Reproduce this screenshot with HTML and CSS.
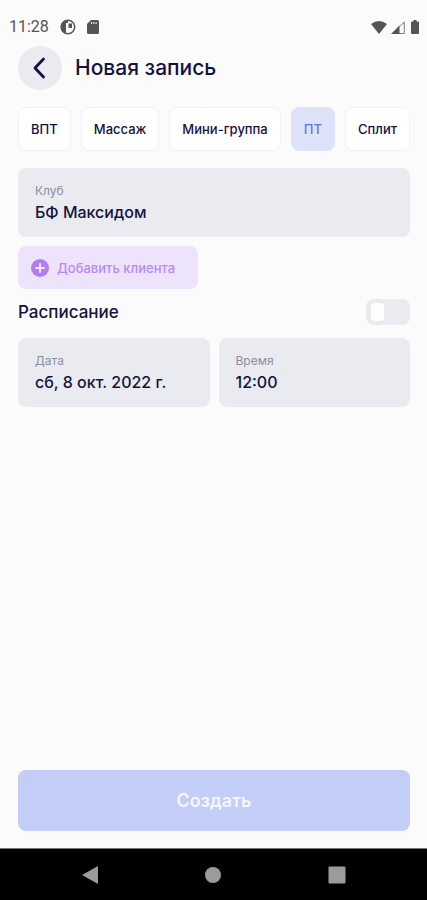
FILE: index.html
```html
<!DOCTYPE html>
<html lang="ru">
<head>
<meta charset="utf-8">
<meta name="viewport" content="width=device-width, initial-scale=1">
<title>Новая запись</title>
<link rel="stylesheet" href="styles.css">
</head>
<body>
<div class="status">
  <span class="clock">11:28</span>
  <svg width="16" height="16" viewBox="0 0 16 16" aria-hidden="true"><circle cx="8" cy="8" r="6.700" fill="none" stroke="#555" stroke-width="1.500"/><path d="M5 1.500A7 7 0 0 0 5 14.500L6 13V4h2V1ZM8.500 4.500H12V9H8.500Z" fill="#555"/></svg>
  <svg width="12" height="14" viewBox="0 0 12 14" aria-hidden="true"><path fill="#555" fill-rule="evenodd" d="M4 0h6.500Q12 0 12 1.500v11Q12 14 10.500 14h-9Q0 14 0 12.500V4ZM4 2v2h1V2ZM6.300 2v2h1V2ZM8.600 2v2h1V2Z"/></svg>
  <div class="signals">
    <svg width="16" height="13" viewBox="0 0 16 13" aria-hidden="true"><path fill="#555" d="M0 3Q8-3 16 3L8 13Z"/></svg>
    <svg width="14" height="13" viewBox="0 0 14 13" aria-hidden="true"><path d="M1.500 12.500 13.300 1v11.500Z" fill="none" stroke="#777"/><path d="M0 13 8.500 4.500V13Z" fill="#555"/></svg>
    <svg width="8" height="14" viewBox="0 0 8 14" aria-hidden="true"><path fill="#555" d="M2.500 0h3v1.500H7q1 0 1 1V13q0 1-1 1H1q-1 0-1-1V2.500q0-1 1-1h1.500Z"/></svg>
  </div>
</div>
<main>
  <header class="header">
    <button class="back" type="button" aria-label="Назад"><svg width="14" height="22" viewBox="0 0 14 22" aria-hidden="true"><path d="M11.500 2 3 11l8.500 9" fill="none" stroke="#15123f" stroke-width="2.800" stroke-linecap="round" stroke-linejoin="round"/></svg></button>
    <h1>Новая запись</h1>
  </header>
  <div class="chips">
    <button class="chip" type="button">ВПТ</button>
    <button class="chip" type="button">Массаж</button>
    <button class="chip" type="button">Мини-группа</button>
    <button class="chip chip-active" type="button" aria-pressed="true">ПТ</button>
    <button class="chip" type="button">Сплит</button>
  </div>
  <div class="field">
    <label for="club">Клуб</label>
    <input id="club" type="text" value="БФ Максидом">
  </div>
  <button class="add" type="button">
    <svg width="18" height="18" viewBox="0 0 18 18" aria-hidden="true"><circle cx="9" cy="9" r="9" fill="#b37cf2"/><path d="M9 5v8M5 9h8" stroke="#f3eafd" stroke-width="2" stroke-linecap="round"/></svg>
    Добавить клиента
  </button>
  <div class="schedule">
    <label for="schedule">Расписание</label>
    <input id="schedule" class="toggle" type="checkbox" role="switch">
  </div>
  <div class="pair">
    <div class="field">
      <label for="date">Дата</label>
      <input id="date" type="text" value="сб, 8 окт. 2022 г.">
    </div>
    <div class="field">
      <label for="time">Время</label>
      <input id="time" type="text" value="12:00">
    </div>
  </div>
  <button class="create" type="button">Создать</button>
</main>
<nav class="system-nav">
  <button type="button" aria-label="Назад"><svg width="18" height="18" viewBox="0 0 18 18"><path d="M1 9 17 0v18Z" fill="#9b9b9b"/></svg></button>
  <button type="button" aria-label="Домой"><svg width="18" height="18" viewBox="0 0 18 18"><circle cx="9" cy="9" r="8" fill="#9b9b9b"/></svg></button>
  <button type="button" aria-label="Недавние"><svg width="18" height="18" viewBox="0 0 18 18"><rect x=".5" y=".5" width="17" height="17" rx="1" fill="#9b9b9b"/></svg></button>
</nav>
</body>
</html>
```
FILE: styles.css
```css
* { box-sizing: border-box; }

body {
  margin: 0;
  min-height: 100vh;
  display: flex;
  flex-direction: column;
  background: #fbfbfb;
  color: #15123f;
  font-family: Inter, "Open Sans", sans-serif;
}

button, input { font: inherit; color: inherit; margin: 0; }
button { border: 0; padding: 0; }
svg { display: block; flex: none; }

.status {
  display: flex;
  align-items: center;
  height: 46px;
  padding: 8px 8px 0 9px;
  gap: 11px;
  color: #555;
  font: 16px/20px Roboto, sans-serif;
}
.signals { display: flex; align-items: center; gap: 4px; margin-left: auto; }
.signals svg:last-child { margin-left: 2px; }

main {
  flex: 1;
  display: flex;
  flex-direction: column;
  padding: 0 17px 17px 18px;
}

.header { display: flex; align-items: center; gap: 13px; margin-bottom: 17px; }
.back {
  display: flex;
  align-items: center;
  justify-content: center;
  width: 44px;
  height: 44px;
  padding-right: 2px;
  border-radius: 50%;
  background: #e9ebf1;
}
h1 { margin: 0; font-size: 21px; line-height: 28px; font-weight: 500; }

.chips { display: flex; gap: 10px; margin-bottom: 17px; }
.chip {
  flex: 1 1 auto;
  height: 44px;
  border: 1px solid #f3f3f5;
  border-radius: 8px;
  background: #fff;
  font-size: 13px;
  font-weight: 500;
  white-space: nowrap;
}
.chip-active { background: #dfe3fa; border-color: #dfe3fa; color: #5d74ea; }

.field {
  display: flex;
  flex-direction: column;
  min-width: 0;
  padding: 14px 17px 13px;
  border-radius: 8px;
  background: #e9ebf0;
}
.field label { color: #8e8d9f; font-size: 12px; line-height: 18px; }
.field input {
  width: 100%;
  height: 24px;
  padding: 0;
  border: 0;
  background: none;
  font-size: 16px;
  font-weight: 500;
}

.add {
  display: flex;
  align-items: center;
  align-self: flex-start;
  gap: 8px;
  height: 43px;
  margin-top: 9px;
  padding: 0 23px 0 13px;
  border-radius: 8px;
  background: #ede3fb;
  color: #b98af0;
  font-size: 13px;
  font-weight: 500;
}

.schedule {
  display: flex;
  align-items: center;
  justify-content: space-between;
  padding-bottom: 4px;
  height: 49px;
  font-size: 17px;
  font-weight: 500;
}
.toggle {
  appearance: none;
  display: flex;
  align-items: center;
  width: 44px;
  height: 26px;
  padding: 0 5px;
  border-radius: 8px;
  background: #e9ebf0;
}
.toggle::before {
  content: "";
  width: 13px;
  height: 18px;
  border-radius: 4px;
  background: #fff;
}
.toggle:checked { justify-content: flex-end; background: #c2cdf8; }

.pair { display: grid; grid-template-columns: 1fr 1fr; gap: 9px; }

.create {
  height: 61px;
  margin-top: auto;
  border-radius: 8px;
  background: #c2cdf8;
  color: #f5f8ff;
  font-size: 18px;
  font-weight: 600;
}

.system-nav {
  display: flex;
  justify-content: space-around;
  align-items: center;
  height: 52px;
  padding: 0 28px;
  border-top: 1px solid #777;
  background: #000;
}
.system-nav button { background: none; }
```
